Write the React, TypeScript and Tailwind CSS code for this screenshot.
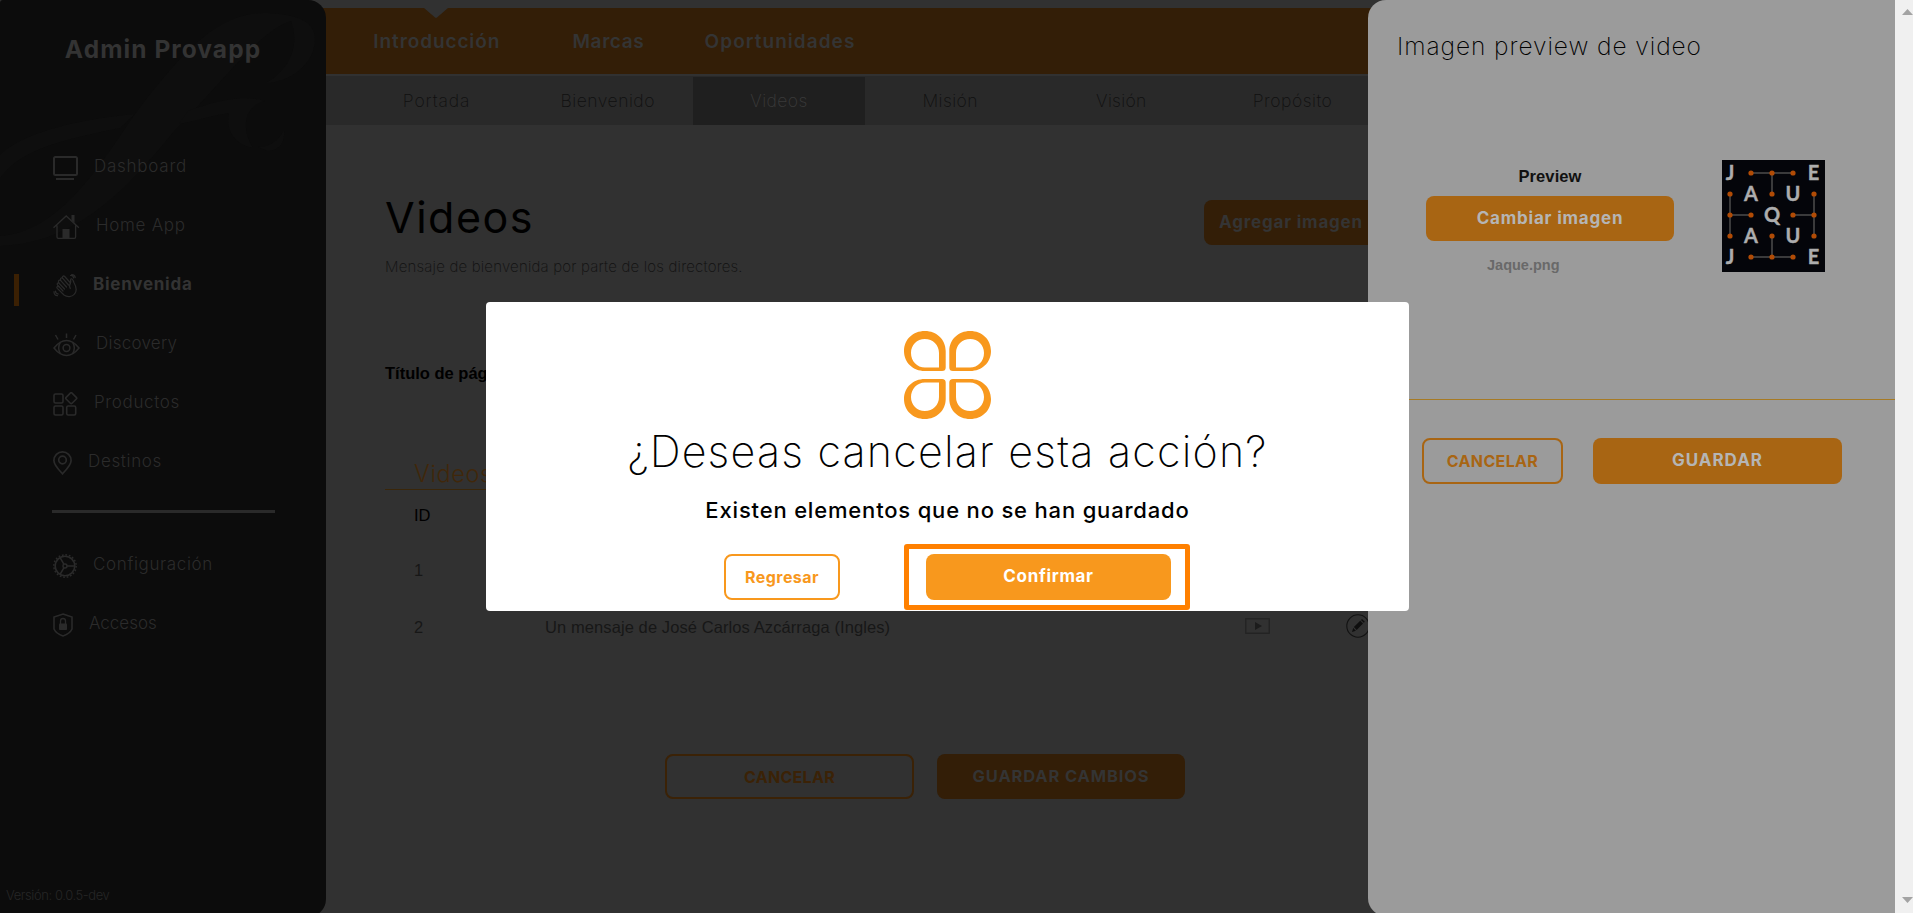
import type { ReactNode } from "react";
import { clsx } from "clsx";

interface MenuItem {
	label: string;
	icon: ReactNode;
	tracking: string;
	active?: boolean;
}

const MAIN_MENU: MenuItem[] = [
	{ label: "Dashboard", icon: <MonitorIcon />, tracking: "tracking-[0.75px]" },
	{ label: "Home App", icon: <HomeIcon />, tracking: "tracking-[0.7px]" },
	{ label: "Bienvenida", icon: <WaveIcon />, tracking: "tracking-[0.75px]", active: true },
	{ label: "Discovery", icon: <EyeIcon />, tracking: "tracking-[0.25px]" },
	{ label: "Productos", icon: <GridIcon />, tracking: "tracking-[0.65px]" },
	{ label: "Destinos", icon: <PinIcon />, tracking: "tracking-[0.65px]" },
];

const SETTINGS_MENU: MenuItem[] = [
	{ label: "Configuración", icon: <GearIcon />, tracking: "tracking-[0.65px]" },
	{ label: "Accesos", icon: <ShieldIcon />, tracking: "tracking-[0px]" },
];

const SECTIONS = [
	{ label: "Introducción", tracking: "tracking-[0.9px]" },
	{ label: "Marcas", tracking: "tracking-[0.6px]" },
	{ label: "Oportunidades", tracking: "tracking-[1.05px]" },
];

const TABS = [
	{ label: "Portada", tracking: "tracking-[0.9px]" },
	{ label: "Bienvenido", tracking: "tracking-[0.5px]" },
	{ label: "Videos", tracking: "tracking-[0.4px]", active: true },
	{ label: "Misión", tracking: "tracking-[0.4px]" },
	{ label: "Visión", tracking: "tracking-[0.3px]" },
	{ label: "Propósito", tracking: "tracking-[0.5px]" },
];

export default function App() {
	return (
		<div className="relative flex h-[913px] w-[1913px] overflow-hidden bg-[#313131] font-['Inter',sans-serif]">
			<Sidebar />
			<VideosPage />
			<PreviewDrawer />
			<Scrollbar />
			<CancelDialog />
		</div>
	);
}

function Sidebar() {
	return (
		<aside className="relative z-10 flex h-[917px] w-[326px] shrink-0 flex-col overflow-hidden rounded-l-[3px] rounded-r-[18px] bg-[#0c0c0c]">
			<Flourish />
			<h1 className="relative mt-8 h-[34px] text-center text-[24.5px] leading-[34px] font-bold tracking-[1.05px] whitespace-nowrap text-[#333333]">
				Admin Provapp
			</h1>
			<nav className="relative mt-[72px]">
				{MAIN_MENU.map((item) => (
					<SidebarItem key={item.label} item={item} />
				))}
			</nav>
			<hr className="relative mt-[18px] ml-[52px] h-[3px] w-[223px] border-0 bg-[#2a2a2a]" />
			<nav className="relative mt-[23px]">
				{SETTINGS_MENU.map((item) => (
					<SidebarItem key={item.label} item={item} />
				))}
			</nav>
			<p className="relative mt-auto mb-3 pl-[6px] text-[13px] leading-5 font-light tracking-[-0.42px] text-[#262626]">
				Versión: 0.0.5-dev
			</p>
		</aside>
	);
}

function SidebarItem({ item }: { item: MenuItem }) {
	return (
		<a className={clsx("flex h-[59px] items-center", item.active ? "pl-[14px]" : "pl-[53px]")}>
			{item.active && <span className="mt-[9px] mr-[34px] h-8 w-[5px] bg-[#3b2003]" />}
			<span className="text-[#2a2a2a]">{item.icon}</span>
			<span
				className={clsx(
					"-mt-1 ml-4 text-[17px] leading-6",
					item.tracking,
					item.active ? "font-bold text-[#333333]" : "font-light text-[#2b2b2b]",
				)}
			>
				{item.label}
			</span>
		</a>
	);
}

function VideosPage() {
	return (
		<main className="-ml-5 w-[1100px] shrink-0 pt-2">
			<header className="relative flex h-[66px] items-center bg-[#331e07] pt-0.5 pl-[45px]">
				<svg className="absolute top-0 left-[118px]" width="24" height="10" viewBox="0 0 24 10">
					<path d="M0 0h24L13 9.5q-1 .9-2 0z" fill="#313131" />
				</svg>
				{SECTIONS.map((section) => (
					<a
						key={section.label}
						className={clsx(
							"w-[171.6px] text-center text-[19px] font-semibold text-[#343434]",
							section.tracking,
						)}
					>
						{section.label}
					</a>
				))}
			</header>
			<nav className="mt-0.5 flex h-[49px] bg-[#292929] pl-[45px]">
				{TABS.map((tab) => (
					<a
						key={tab.label}
						className={clsx(
							"mt-px flex w-[171.2px] items-center justify-center text-[17.5px] font-extralight",
							tab.tracking,
							tab.active ? "bg-[#1f1f1f] text-[#3a3a3a]" : "text-[#101010]",
						)}
					>
						{tab.label}
					</a>
				))}
			</nav>

			<section className="pl-[79px]">
				<div className="mt-[67px] flex items-start justify-between">
					<div>
						<h2 className="text-[43px] leading-[50px] font-normal tracking-[1.5px] text-black">Videos</h2>
						<p className="mt-[13px] text-[15px] leading-6 font-extralight tracking-[0.2px] text-[#101010]">
							Mensaje de bienvenida por parte de los directores.
						</p>
					</div>
					<button
						type="button"
						className="mt-2 mr-[28px] h-[45px] w-[174px] rounded-lg bg-[#331e07] text-[17px] font-bold tracking-[0.8px] whitespace-nowrap text-[#343434]"
					>
						Agregar imagen
					</button>
				</div>

				<p className="mt-[82px] font-['Liberation_Sans',sans-serif] text-[16.5px] leading-6 font-bold text-black">
					Título de página
				</p>

				<h3 className="mt-[74px] border-b border-[#3a2609] pl-[29px] text-[23.5px] leading-[30px] font-light tracking-[0.6px] text-[#40270a]">
					Videos
				</h3>
				<div className="font-['Liberation_Sans',sans-serif] text-[16.5px] text-[#171717]">
					<div className="mb-[2px] flex h-[50px] items-center pl-[29px] text-black">ID</div>
					<div className="flex h-[57px] items-center pl-[29px]">1</div>
					<div className="flex h-[57px] items-center pl-[29px]">
						<span className="w-[131px]">2</span>
						<span className="-mt-px w-[700px] tracking-[0.09px]">
							Un mensaje de José Carlos Azcárraga (Ingles)
						</span>
						<svg className="-mt-1" width="25" height="16" viewBox="0 0 25 16">
							<rect x=".75" y=".75" width="23.5" height="14.5" fill="none" stroke="#222222" strokeWidth="1.2" />
							<path d="M10 4l7 4-7 4z" fill="#1c1c1c" />
						</svg>
						<svg className="-mt-1 ml-[76px]" width="24" height="24" viewBox="0 0 24 24">
							<circle cx="12" cy="12" r="11.2" fill="none" stroke="#121212" strokeWidth="1.1" />
							<path d="M6 18l1.2-4 2.7 2.7zM7.9 13.1l6.3-6.4 2.8 2.8-6.3 6.4zM15 6l1-1 2.8 2.8-1 1z" fill="#0e0e0e" />
						</svg>
					</div>
				</div>
			</section>

			<div className="mt-[98px] flex gap-[23px] pl-[359px] font-bold">
				<button
					type="button"
					className="h-[45px] w-[249px] rounded-lg border-2 border-[#3b2206] text-[16px] tracking-[0.3px] text-[#3b2206]"
				>
					CANCELAR
				</button>
				<button
					type="button"
					className="h-[45px] w-[248px] rounded-lg bg-[#331e07] text-[16.5px] tracking-[0.85px] text-[#343434]"
				>
					GUARDAR CAMBIOS
				</button>
			</div>
		</main>
	);
}

function PreviewDrawer() {
	return (
		<section className="absolute top-0 right-[18px] h-[916px] w-[527px] rounded-l-[18px] bg-[#9b9b9b]">
			<h2 className="pt-[30px] pl-[29px] text-[24.5px] leading-[32px] font-extralight tracking-[0.93px] text-black">
				Imagen preview de video
			</h2>
			<div className="mt-[98px] flex h-[240px] border-b border-[#a67a24] pl-[58px]">
				<div className="w-[248px] pt-1 font-['Liberation_Sans',sans-serif] font-bold">
					<p className="text-center text-[16.5px] leading-6 tracking-[0.1px] text-[#111111]">Preview</p>
					<button
						type="button"
						className="mt-2 h-[45px] w-full rounded-lg bg-[#a86513] font-['Inter',sans-serif] text-[17px] font-bold tracking-[0.8px] text-[#b5b5b5]"
					>
						Cambiar imagen
					</button>
					<p className="mt-[14px] pl-[61px] text-[14.5px] leading-5 text-[#696969]">Jaque.png</p>
				</div>
				<JaqueThumbnail />
			</div>
			<div className="mt-[38px] flex gap-[30px] pl-[54px] font-bold">
				<button
					type="button"
					className="h-[46px] w-[141px] rounded-lg border-2 border-[#a86513] text-[16px] tracking-[0.35px] text-[#a86513]"
				>
					CANCELAR
				</button>
				<button
					type="button"
					className="h-[46px] w-[249px] rounded-lg bg-[#a86513] text-[17px] tracking-[0.95px] text-[#b5b5b5]"
				>
					GUARDAR
				</button>
			</div>
		</section>
	);
}

function Scrollbar() {
	return (
		<div className="absolute top-0 right-0 flex h-full w-[18px] flex-col items-end justify-between bg-[#f0f0f0] pt-[9px] pb-[10px]">
			<svg width="11" height="6" viewBox="0 0 11 6">
				<path d="M0 6L5.5 0 11 6z" fill="#a3a3a3" />
			</svg>
			<svg width="11" height="6" viewBox="0 0 11 6">
				<path d="M0 0L5.5 6 11 0z" fill="#a3a3a3" />
			</svg>
		</div>
	);
}

function CancelDialog() {
	return (
		<div
			role="dialog"
			className="absolute top-[302px] left-[486px] z-20 flex h-[309px] w-[923px] flex-col items-center rounded bg-white pt-[29px]"
		>
			<CloverLogo />
			<h2 className="mt-[5px] text-[43px] leading-[54px] font-extralight tracking-[1.2px] whitespace-nowrap text-black">
				¿Deseas cancelar esta acción?
			</h2>
			<p className="mt-4 text-[22px] leading-[32px] font-medium tracking-[0.82px] whitespace-nowrap text-black">
				Existen elementos que no se han guardado
			</p>
			<div className="mt-[18px] flex w-full items-center pl-[238px]">
				<button
					type="button"
					className="h-[46px] w-[116px] rounded-lg border-2 border-[#f8981d] text-[16px] font-bold tracking-[0.45px] text-[#f8981d]"
				>
					Regresar
				</button>
				<div className="ml-[64px] flex h-[66px] w-[286px] items-center rounded-[3px] border-[5px] border-[#ff8000] pl-[17px]">
					<button
						type="button"
						className="h-[46px] w-[245px] rounded-lg bg-[#f8981d] text-[17px] font-bold tracking-[0.65px] text-white"
					>
						Confirmar
					</button>
				</div>
			</div>
		</div>
	);
}

function CloverLogo() {
	// One petal, mirrored into the four quadrants
	const petal =
		"M20.8 0H21C32.5 0 41.7 8.5 41.7 20V36.5Q41.7 40 38 40H20.8C9 40 0 31.5 0 20S9 0 20.8 0Z M20.8 8C13 8 7 14 7 22C7 30 13 36.6 21 36.6H35V22C35 14 29 8 20.8 8Z";

	return (
		<svg className="shrink-0" width="87" height="88" viewBox="0 0 87 88" fill="#f8981d" fillRule="evenodd">
			<path d={petal} />
			<path d={petal} transform="matrix(-1 0 0 1 87 0)" />
			<path d={petal} transform="matrix(1 0 0 -1 0 88)" />
			<path d={petal} transform="matrix(-1 0 0 -1 87 88)" />
		</svg>
	);
}

const THUMB_LETTERS: [string, number, number][] = [
	["J", 8, 20],
	["E", 91.5, 20],
	["A", 29, 41],
	["U", 71, 41],
	["Q", 50, 62],
	["A", 29, 83],
	["U", 71, 83],
	["J", 8, 104],
	["E", 91.5, 104],
];

const THUMB_DOTS: [number, number][] = [
	[29, 13], [50, 13], [71, 13], [50, 34],
	[8, 34], [8, 55], [29, 55], [8, 76],
	[92, 34], [92, 55], [71, 55], [92, 76],
	[50, 76], [29, 97], [50, 97], [71, 97],
];

function JaqueThumbnail() {
	return (
		<svg className="ml-[48px]" width="103" height="112" viewBox="0 0 103 112">
			<rect width="103" height="112" fill="#04050a" />
			<path
				d="M29 13H71M50 13V34M8 34V76M8 55H29M92 34V76M71 55H92M50 76V97M29 97H71"
				stroke="#4c4c4c"
				strokeWidth="1.5"
				fill="none"
			/>
			{THUMB_DOTS.map(([x, y]) => (
				<circle key={`${x}-${y}`} cx={x} cy={y} r="2.6" fill="#b14b05" />
			))}
			{THUMB_LETTERS.map(([letter, x, y]) => (
				<text
					key={`${x}-${y}`}
					x={x}
					y={y}
					textAnchor="middle"
					fill="#adadad"
					stroke="#adadad"
					strokeWidth=".4"
					className="font-['Lato',sans-serif] text-[20px] font-bold"
				>
					{letter}
				</text>
			))}
		</svg>
	);
}

function Flourish() {
	return (
		<svg className="absolute top-0 left-0" width="326" height="260" viewBox="0 0 326 260" fill="#0e0e0e">
			<path d="M0 236C60 232 100 165 135 114C175 62 215 10 268 13C300 15 315 22 315 40C314 65 290 82 266 83C290 70 300 45 291 21C260 30 220 85 175 130C130 185 80 243 0 246Z" />
			<path d="M0 155C20 135 70 120 135 114L120 128C60 140 20 150 0 178Z" />
			<path d="M188 111C205 105 240 93 265 101C245 105 240 128 253 148C235 145 225 130 229 113C210 116 195 121 179 124Z" />
			<path d="M258 147Q275 147 284 130Q286 149 268 151Z" />
		</svg>
	);
}

function MonitorIcon() {
	return (
		<svg width="25" height="24" viewBox="0 0 25 24" fill="none" stroke="currentColor" strokeWidth="2">
			<rect x="1" y="1" width="23" height="18" rx="1.5" />
			<path d="M3 23h18" />
		</svg>
	);
}

function HomeIcon() {
	return (
		<svg width="27" height="24" viewBox="0 0 27 24" fill="none" stroke="currentColor" strokeWidth="1.3">
			<path d="M.5 12.8L13.2 1l12.7 11.8M4 10.5v11.5q0 1.3 1.3 1.3h16q1.3 0 1.3-1.3V10.5" />
			<path d="M18.5 0h3v8l-3-2.8zM9.5 14h7v9.3h-7z" fill="currentColor" stroke="none" />
		</svg>
	);
}

function WaveIcon() {
	return (
		<svg
			width="24"
			height="24"
			viewBox="0 0 24 24"
			fill="none"
			stroke="currentColor"
			strokeWidth="1.2"
			strokeLinecap="round"
			strokeLinejoin="round"
		>
			<path d="M15.5 11L9.8 4.3C8.6 3 10.3 1.2 11.7 2.5L17.5 9C18.3 7.5 16.8 5.5 18.2 4.8C19.7 4.3 20.2 6.5 21 8.8C23.5 13 24 17 21.5 20C19 23.3 14 23.3 11 21L4.3 14.3C3.2 12.9 4.6 11.6 6 12.8" />
			<path d="M10 17L4.5 11C3.5 9.5 5 8.3 6.3 9.5L11.5 15M6.3 9.5L5.5 8C5 6.3 6.7 5.5 8 6.8L13.5 13M8 6.8L7.5 5.5C7.3 4 8.8 3.2 9.8 4.3M17.5 9Q15.8 12 17.3 14.5" />
			<path d="M17.5 1.5Q20.3 1.2 20.6 4M18.8.6Q22 .6 22.2 3.6M2.5 17Q2.5 19.7 5.3 20M1 17.7Q1 21.3 4.5 21.7" />
		</svg>
	);
}

function EyeIcon() {
	return (
		<svg width="27" height="24" viewBox="0 0 27 24" fill="none" stroke="currentColor" strokeWidth="1.5">
			<path d="M1 15Q7 7.5 13.5 7.5T26 15Q20 22.5 13.5 22.5T1 15Z" />
			<circle cx="13.5" cy="15" r="3.4" />
			<path d="M7.5 9.2Q3.8 15 7.5 20.8M19.5 9.2Q23.2 15 19.5 20.8M13.5.5V5M2.5 2L5 6.5M23 2l-2.500 4.500" />
		</svg>
	);
}

function GridIcon() {
	return (
		<svg width="25" height="24" viewBox="0 0 25 24" fill="none" stroke="currentColor" strokeWidth="1.6">
			<rect x="1" y="2" width="9" height="9" rx="1.5" />
			<rect x="1" y="14" width="9" height="9" rx="1.5" />
			<rect x="13.7" y="14" width="9" height="9" rx="1.5" />
			<rect x="14" y="2" width="8.4" height="8.4" rx="1.2" transform="rotate(45 18.2 6.2)" />
		</svg>
	);
}

function PinIcon() {
	return (
		<svg width="19" height="24" viewBox="0 0 19 24" fill="none" stroke="currentColor" strokeWidth="1.7">
			<path d="M9.5 22.8C5 18 .9 14 .9 9.5a8.6 8.6 0 0 1 17.2 0C18.1 14 14 18 9.5 22.8z" />
			<circle cx="9.5" cy="9" r="3.8" />
		</svg>
	);
}

function GearIcon() {
	return (
		<svg width="24" height="24" viewBox="0 0 24 24" fill="none" stroke="currentColor">
			<circle cx="12" cy="12" r="9.8" strokeWidth="1.6" />
			<circle cx="12" cy="12" r="11.2" strokeWidth="1.5" strokeDasharray="1.76 1.76" />
			<circle cx="12" cy="12" r="2" strokeWidth="1.4" />
			<path d="M14 12h8M11 10.3L7 3.5M11 13.7L7 20.5" strokeWidth="1.5" />
		</svg>
	);
}

function ShieldIcon() {
	return (
		<svg width="20" height="24" viewBox="0 0 20 24" fill="none" stroke="currentColor" strokeWidth="1.6">
			<path d="M10 1L19 4V16Q17 20.5 10 23Q3 20.5 1 16V4Z" />
			<path d="M7.5 11V8a2.5 2.5 0 0 1 5 0v3" strokeWidth="1.3" />
			<rect x="6" y="10.5" width="8" height="6.5" rx=".8" fill="currentColor" stroke="none" />
		</svg>
	);
}
